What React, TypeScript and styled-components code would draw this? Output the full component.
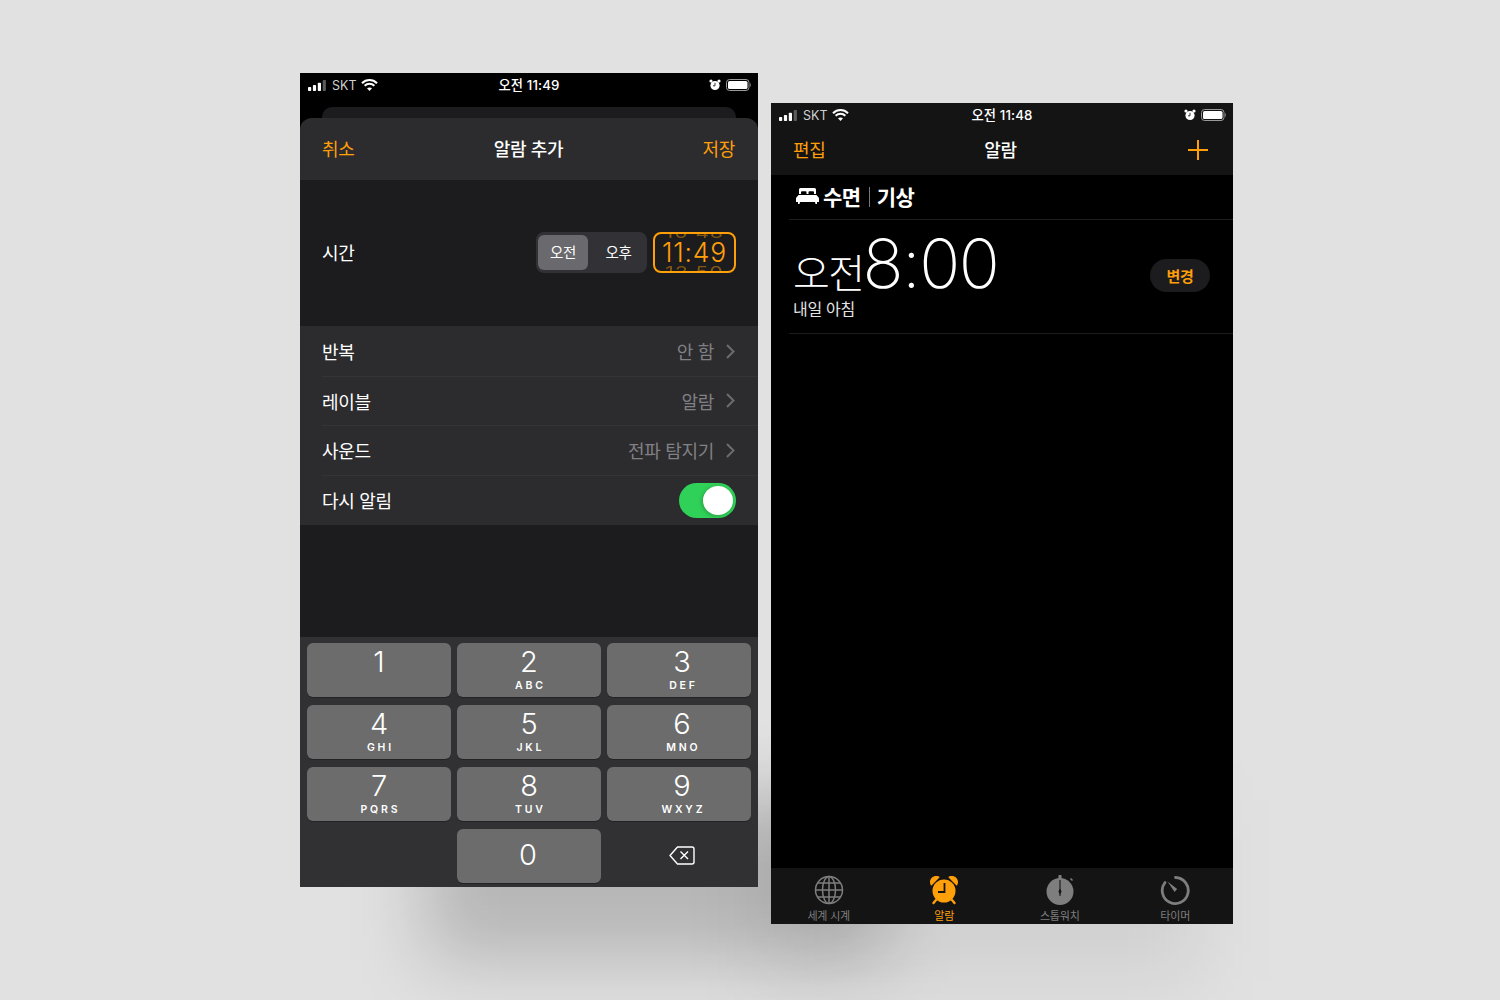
import React from "react";
import styled, { createGlobalStyle } from "styled-components";

const ORANGE = "#ff9f0a";
const FONT = `Inter, "Noto Sans CJK KR", sans-serif`;

const GlobalStyle = createGlobalStyle`
    html, body {
        margin: 0;
        padding: 0;
        background: #e1e1e1;
        font-family: ${FONT};
    }
`;

const Stage = styled.div`
    position: relative;
    width: 1500px;
    height: 1000px;
    overflow: hidden;
    display: flex;
    align-items: flex-start;
    gap: 13px;
    padding-left: 300px;
    box-sizing: border-box;
    background: #e1e1e1;
`;

// soft drop shadows lying under the two phones
const ShadowNear = styled.div`
    position: absolute;
    left: 425px;
    top: 800px;
    width: 460px;
    height: 160px;
    background: rgba(0, 0, 0, 0.19);
    filter: blur(36px);
`;

const ShadowFar = styled.div`
    position: absolute;
    left: 760px;
    top: 800px;
    width: 440px;
    height: 180px;
    background: rgba(0, 0, 0, 0.07);
    filter: blur(40px);
`;

const AddPhone = styled.div`
    position: relative;
    width: 458px;
    height: 814px;
    margin-top: 73px;
    background: #000;
    display: flex;
    flex-direction: column;
`;

const ListPhone = styled.div`
    position: relative;
    width: 462px;
    height: 821px;
    margin-top: 103px;
    background: #000;
    display: flex;
    flex-direction: column;
`;

const StatusBar = styled.div<{ $bg: string }>`
    height: 24px;
    flex: none;
    padding: 0 6px 0 8px;
    display: grid;
    grid-template-columns: 1fr auto 1fr;
    align-items: center;
    background: ${(p) => p.$bg};
    color: #fff;
`;

const StatusLeft = styled.div`
    display: flex;
    align-items: center;
    gap: 4px;
    font-size: 12.5px;
    color: #d0d0d0;
`;

const StatusTime = styled.div`
    font-size: 13.3px;
    font-weight: 500;
    letter-spacing: 0.1px;
    margin-top: -2px;
    margin-right: 2px;
`;

const StatusRight = styled.div`
    display: flex;
    justify-content: flex-end;
    align-items: center;
    gap: 5px;
`;

const BackCard = styled.div`
    height: 11px;
    flex: none;
    margin: 10px 22px 0;
    background: #1c1c1e;
    border-radius: 10px 10px 0 0;
`;

const Sheet = styled.div`
    flex: 1;
    display: flex;
    flex-direction: column;
    background: #1c1c1e;
    border-radius: 12px 12px 0 0;
    overflow: hidden;
`;

const SheetHeader = styled.div`
    height: 62px;
    flex: none;
    padding: 0 23px 3px 22px;
    box-sizing: border-box;
    display: grid;
    grid-template-columns: 1fr auto 1fr;
    align-items: center;
    background: #2c2c2e;
    font-size: 18px;
    letter-spacing: -0.3px;
    color: #fff;
`;

const HeaderAction = styled.div<{ $end?: boolean }>`
    color: ${ORANGE};
    text-align: ${(p) => (p.$end ? "right" : "left")};
`;

const HeaderTitle = styled.div`
    font-weight: 500;
`;

const TimeRow = styled.div`
    height: 146px;
    flex: none;
    padding: 0 22px 2px;
    box-sizing: border-box;
    display: flex;
    align-items: center;
    color: #fff;
    font-size: 18px;
    letter-spacing: -0.3px;
`;

const TimeLabel = styled.div`
    flex: 1;
`;

const Segment = styled.div`
    width: 111px;
    height: 41px;
    box-sizing: border-box;
    padding: 3px 2px;
    margin-right: 6px;
    display: grid;
    grid-template-columns: 50px 1fr;
    background: #323236;
    border-radius: 8px;
`;

const SegmentItem = styled.div<{ $active?: boolean }>`
    display: flex;
    align-items: center;
    justify-content: center;
    font-size: 14.5px;
    padding-left: ${(p) => (p.$active ? "0" : "4px")};
    padding-bottom: 1px;
    border-radius: 6px;
    background: ${(p) => (p.$active ? "#69696e" : "transparent")};
`;

const TimeWheel = styled.div`
    width: 83px;
    height: 41px;
    box-sizing: border-box;
    border: 2px solid ${ORANGE};
    border-radius: 8px;
    overflow: hidden;
    display: flex;
    flex-direction: column;
    align-items: center;
    justify-content: center;
    color: ${ORANGE};
`;

const WheelPeek = styled.div`
    flex: none;
    height: 11px;
    font-size: 21px;
    line-height: 11px;
    letter-spacing: 1px;
    opacity: 0.45;
    transform: scaleY(0.7);
`;

const WheelValue = styled.div`
    flex: none;
    font-size: 26.5px;
    font-weight: 300;
    line-height: 28px;
    letter-spacing: 0.8px;
`;

const OptionList = styled.div`
    flex: none;
    padding-top: 1px;
    background: #2c2c2e;
`;

const OptionRow = styled.div`
    height: 49.5px;
    margin-left: 22px;
    padding-right: 23px;
    box-sizing: border-box;
    display: flex;
    align-items: center;
    color: #fff;
    font-size: 18px;
    letter-spacing: -0.3px;
    border-bottom: 1px solid #343436;
    &:last-child {
        border-bottom: none;
        padding-right: 22px;
    }
`;

const OptionLabel = styled.div`
    flex: 1;
`;

const OptionValue = styled.div`
    color: #808085;
    margin-right: 12px;
`;

const Toggle = styled.div`
    width: 57px;
    height: 35px;
    box-sizing: border-box;
    padding: 3px;
    display: flex;
    justify-content: flex-end;
    background: #30d158;
    border-radius: 18px;
`;

const ToggleKnob = styled.div`
    width: 30px;
    height: 29px;
    border-radius: 50%;
    background: #fff;
    box-shadow: -1px 1px 4px rgba(0, 0, 0, 0.25);
`;

const Keypad = styled.div`
    margin-top: auto;
    height: 250px;
    flex: none;
    box-sizing: border-box;
    padding: 6px 7px 0;
    display: grid;
    grid-template-columns: repeat(3, 144px);
    grid-auto-rows: 54px;
    column-gap: 6px;
    row-gap: 8px;
    background: #313133;
`;

const Key = styled.div`
    display: flex;
    flex-direction: column;
    align-items: center;
    background: #6c6c6c;
    border-radius: 6px;
    box-shadow: 0 1px 0 #232325;
    color: #fff;
    &:nth-child(3n) {
        padding-left: 6px;
    }
`;

const KeyDigit = styled.div<{ $solo?: boolean }>`
    font-size: 29px;
    font-weight: 300;
    line-height: 30px;
    margin-top: ${(p) => (p.$solo ? "11px" : "4px")};
    margin-right: ${(p) => (p.$solo ? "2px" : "0")};
`;

const KeyLetters = styled.div`
    font-size: 10.5px;
    font-weight: 600;
    line-height: 12px;
    letter-spacing: 2.8px;
    margin-right: -2.8px;
    margin-top: 3px;
`;

const KeySlot = styled.div`
    display: flex;
    align-items: center;
    justify-content: center;
    &:last-child {
        padding-left: 6px;
        padding-bottom: 2px;
    }
`;

const NavBar = styled.div`
    height: 48px;
    flex: none;
    box-sizing: border-box;
    padding: 0 25px 5px 22px;
    display: grid;
    grid-template-columns: 1fr auto 1fr;
    align-items: center;
    background: #141414;
    color: #fff;
    font-size: 18px;
    letter-spacing: -0.3px;
`;

const NavTitle = styled.div`
    font-weight: 500;
`;

const NavEnd = styled.div`
    display: flex;
    justify-content: flex-end;
    padding-top: 2px;
`;

const SleepRow = styled.div`
    height: 45px;
    flex: none;
    margin-left: 18px;
    padding: 0 0 3px 7px;
    box-sizing: border-box;
    display: flex;
    align-items: center;
    border-bottom: 1px solid #1c1c1e;
    color: #fff;
    font-size: 21px;
    font-weight: 700;
    letter-spacing: -0.5px;
`;

const SleepWord = styled.span`
    margin-left: 4px;
`;

const SleepDivider = styled.span`
    width: 1px;
    height: 20px;
    margin: 3px 7px 0 8px;
    background: #77777c;
`;

const AlarmRow = styled.div`
    height: 114px;
    flex: none;
    margin-left: 18px;
    padding: 0 23px 6px 4px;
    box-sizing: border-box;
    display: flex;
    align-items: center;
    border-bottom: 1px solid #1c1c1e;
    color: #fff;
`;

const AlarmInfo = styled.div`
    flex: 1;
`;

const AlarmTime = styled.div`
    display: flex;
    align-items: baseline;
    height: 70px;
    line-height: 70px;
`;

const AlarmPeriod = styled.span`
    font-size: 40px;
    font-weight: 300;
    letter-spacing: -1.5px;
    margin-right: -1px;
`;

const AlarmClock = styled.span`
    font-size: 68px;
    font-weight: 200;
    letter-spacing: -1.6px;
`;

const AlarmNote = styled.div`
    font-size: 16px;
    line-height: 22px;
    letter-spacing: -0.3px;
    color: #e4e4e4;
`;

const ChangeButton = styled.div`
    width: 60px;
    height: 33px;
    margin-top: 4px;
    display: flex;
    align-items: center;
    justify-content: center;
    border-radius: 17px;
    background: #1c1c1e;
    color: ${ORANGE};
    font-size: 15px;
    font-weight: 700;
    letter-spacing: -0.4px;
`;

const TabBar = styled.div`
    margin-top: auto;
    height: 56px;
    flex: none;
    display: grid;
    grid-template-columns: repeat(4, 1fr);
    background: #141414;
`;

const Tab = styled.div<{ $active?: boolean }>`
    display: flex;
    flex-direction: column;
    align-items: center;
    padding-top: 7px;
    box-sizing: border-box;
    color: ${(p) => (p.$active ? ORANGE : "#7e7e7e")};
    font-size: 11px;
    letter-spacing: -0.2px;
    line-height: 14px;
    svg {
        display: block;
        margin-bottom: 4px;
    }
`;

const SignalIcon = () => (
    <svg width="20" height="11" viewBox="0 0 20 11">
        <rect x="0" y="7" width="3.2" height="4" rx="0.8" fill="#fff" />
        <rect x="4.9" y="5" width="3.2" height="6" rx="0.8" fill="#fff" />
        <rect x="9.8" y="2.8" width="3.2" height="8.2" rx="0.8" fill="#fff" />
        <rect x="14.7" y="0" width="3.2" height="11" rx="0.8" fill="#5a5a5a" />
    </svg>
);

const WifiIcon = () => (
    <svg width="17" height="12" viewBox="0 0 17 12" fill="none" stroke="#fff" strokeWidth="2">
        <path d="M1 4.2 C5.2 0 11.8 0 16 4.2" />
        <path d="M3.6 6.8 C6.4 4.2 10.6 4.2 13.4 6.8" />
        <path d="M8.5 12 L6 9.3 C7.4 8.1 9.6 8.1 11 9.3 Z" fill="#fff" stroke="none" />
    </svg>
);

const StatusAlarmIcon = () => (
    <svg width="12" height="12" viewBox="0 0 12 12">
        <circle cx="6" cy="6.5" r="4.6" fill="#fff" />
        <circle cx="2" cy="2" r="1.6" fill="#fff" />
        <circle cx="10" cy="2" r="1.6" fill="#fff" />
        <path d="M6 3.8 V6.8 H4" stroke="#333" strokeWidth="1" fill="none" />
    </svg>
);

const BatteryIcon = () => (
    <svg width="26" height="12" viewBox="0 0 26 12">
        <rect x="0.5" y="0.5" width="22.5" height="11" rx="3" fill="none" stroke="#9a9a9a" />
        <rect x="2" y="2" width="19.5" height="8" rx="1.6" fill="#fff" />
        <path d="M24.3 4 C25.3 4.4 25.3 7.6 24.3 8 Z" fill="#9a9a9a" />
    </svg>
);

const ChevronIcon = () => (
    <svg width="9" height="15" viewBox="0 0 9 15" fill="none" stroke="#6b6b70" strokeWidth="2">
        <path d="M1 1 L7.5 7.5 L1 14" />
    </svg>
);

const BackspaceIcon = () => (
    <svg width="26" height="19" viewBox="0 0 26 19" fill="none" stroke="#fff" strokeWidth="1.4">
        <path d="M8.5 1 H23 a2 2 0 0 1 2 2 V16 a2 2 0 0 1 -2 2 H8.5 L1 9.5 Z" strokeLinejoin="round" />
        <path d="M11.5 5.5 L19 13 M19 5.5 L11.5 13" />
    </svg>
);

const PlusIcon = () => (
    <svg width="20" height="20" viewBox="0 0 20 20" stroke={ORANGE} strokeWidth="2">
        <path d="M0 10 H20 M10 0 V20" />
    </svg>
);

const BedIcon = () => (
    <svg width="23" height="16" viewBox="0 0 23 16" fill="#fff">
        <path d="M3 1.5 a1.5 1.5 0 0 1 1.5 -1.5 H18.5 a1.5 1.5 0 0 1 1.5 1.5 V6 H18 V4.2 a1 1 0 0 0 -1 -1 H13.5 a1 1 0 0 0 -1 1 V6 H10.5 V4.2 a1 1 0 0 0 -1 -1 H6 a1 1 0 0 0 -1 1 V6 H3 Z" />
        <path d="M2.5 7 H20.5 L23 10 V14 H21 V16 H19.5 L19 14 H4 L3.5 16 H2 V14 H0 V10 Z" />
    </svg>
);

const GlobeIcon = () => (
    <svg width="30" height="30" viewBox="0 0 30 30" fill="none" stroke="#7e7e7e" strokeWidth="1.5">
        <circle cx="15" cy="15" r="13.5" />
        <ellipse cx="15" cy="15" rx="6.5" ry="13.5" />
        <path d="M15 1.5 V28.5 M1.5 15 H28.5 M3.5 8 H26.5 M3.5 22 H26.5" />
    </svg>
);

const AlarmTabIcon = () => (
    <svg width="30" height="30" viewBox="0 0 30 30">
        <circle cx="15" cy="16" r="11.5" fill={ORANGE} />
        <path d="M1.8 10.2 C-1 5 3.8 -0.6 10 1.6 C10.6 1.8 10.6 2.4 10.2 2.7 L2.8 10.2 C2.5 10.6 2 10.6 1.8 10.2 Z" fill={ORANGE} />
        <path d="M28.2 10.2 C31 5 26.2 -0.6 20 1.6 C19.4 1.8 19.4 2.4 19.8 2.7 L27.2 10.2 C27.5 10.6 28 10.6 28.2 10.2 Z" fill={ORANGE} />
        <path d="M7 25 L4.5 28 M23 25 L25.5 28" stroke={ORANGE} strokeWidth="2.4" strokeLinecap="round" />
        <path d="M15.5 8 V17 H9" stroke="#141414" strokeWidth="1.8" fill="none" />
    </svg>
);

const StopwatchIcon = () => (
    <svg width="30" height="30" viewBox="0 0 30 30">
        <circle cx="15" cy="16.5" r="13.5" fill="#7e7e7e" />
        <rect x="13.4" y="0" width="3.2" height="3.5" rx="1" fill="#7e7e7e" />
        <path d="M25.5 3.5 L27.5 5.5" stroke="#7e7e7e" strokeWidth="1.6" />
        <path d="M15 5 V21" stroke="#141414" strokeWidth="1.1" />
        <path d="M15 13.5 L16.6 16.5 L15 19.5 L13.4 16.5 Z" fill="#141414" />
    </svg>
);

const TimerIcon = () => (
    <svg width="30" height="30" viewBox="0 0 30 30" fill="none" stroke="#7e7e7e" strokeWidth="2.8">
        <path d="M15.5 2.5 A13 13 0 1 1 5 7.5" strokeLinecap="round" />
        <path d="M7.5 6.5 L17.2 14 L14.6 17 Z" fill="#7e7e7e" stroke="none" />
    </svg>
);

const keys = [
    ["1", ""], ["2", "ABC"], ["3", "DEF"],
    ["4", "GHI"], ["5", "JKL"], ["6", "MNO"],
    ["7", "PQRS"], ["8", "TUV"], ["9", "WXYZ"],
];

const options = [
    ["반복", "안 함"],
    ["레이블", "알람"],
    ["사운드", "전파 탐지기"],
];

const App: React.FC = () => {
    return (
        <Stage>
            <GlobalStyle />
            <ShadowNear />
            <ShadowFar />
            <AddPhone>
                <StatusBar $bg="#000">
                    <StatusLeft>
                        <SignalIcon />
                        <span>SKT</span>
                        <WifiIcon />
                    </StatusLeft>
                    <StatusTime>오전 11:49</StatusTime>
                    <StatusRight>
                        <StatusAlarmIcon />
                        <BatteryIcon />
                    </StatusRight>
                </StatusBar>
                <BackCard />
                <Sheet>
                    <SheetHeader>
                        <HeaderAction>취소</HeaderAction>
                        <HeaderTitle>알람 추가</HeaderTitle>
                        <HeaderAction $end>저장</HeaderAction>
                    </SheetHeader>
                    <TimeRow>
                        <TimeLabel>시간</TimeLabel>
                        <Segment>
                            <SegmentItem $active>오전</SegmentItem>
                            <SegmentItem>오후</SegmentItem>
                        </Segment>
                        <TimeWheel>
                            <WheelPeek>10 48</WheelPeek>
                            <WheelValue>11:49</WheelValue>
                            <WheelPeek>12 50</WheelPeek>
                        </TimeWheel>
                    </TimeRow>
                    <OptionList>
                        {options.map(([label, value]) => (
                            <OptionRow key={label}>
                                <OptionLabel>{label}</OptionLabel>
                                <OptionValue>{value}</OptionValue>
                                <ChevronIcon />
                            </OptionRow>
                        ))}
                        <OptionRow>
                            <OptionLabel>다시 알림</OptionLabel>
                            <Toggle>
                                <ToggleKnob />
                            </Toggle>
                        </OptionRow>
                    </OptionList>
                    <Keypad>
                        {keys.map(([digit, letters]) => (
                            <Key key={digit}>
                                <KeyDigit>{digit}</KeyDigit>
                                {letters && <KeyLetters>{letters}</KeyLetters>}
                            </Key>
                        ))}
                        <KeySlot />
                        <Key>
                            <KeyDigit $solo>0</KeyDigit>
                        </Key>
                        <KeySlot>
                            <BackspaceIcon />
                        </KeySlot>
                    </Keypad>
                </Sheet>
            </AddPhone>
            <ListPhone>
                <StatusBar $bg="#141414">
                    <StatusLeft>
                        <SignalIcon />
                        <span>SKT</span>
                        <WifiIcon />
                    </StatusLeft>
                    <StatusTime>오전 11:48</StatusTime>
                    <StatusRight>
                        <StatusAlarmIcon />
                        <BatteryIcon />
                    </StatusRight>
                </StatusBar>
                <NavBar>
                    <HeaderAction>편집</HeaderAction>
                    <NavTitle>알람</NavTitle>
                    <NavEnd>
                        <PlusIcon />
                    </NavEnd>
                </NavBar>
                <SleepRow>
                    <BedIcon />
                    <SleepWord>수면</SleepWord>
                    <SleepDivider />
                    <span>기상</span>
                </SleepRow>
                <AlarmRow>
                    <AlarmInfo>
                        <AlarmTime>
                            <AlarmPeriod>오전</AlarmPeriod>
                            <AlarmClock>8:00</AlarmClock>
                        </AlarmTime>
                        <AlarmNote>내일 아침</AlarmNote>
                    </AlarmInfo>
                    <ChangeButton>변경</ChangeButton>
                </AlarmRow>
                <TabBar>
                    <Tab>
                        <GlobeIcon />
                        세계 시계
                    </Tab>
                    <Tab $active>
                        <AlarmTabIcon />
                        알람
                    </Tab>
                    <Tab>
                        <StopwatchIcon />
                        스톱워치
                    </Tab>
                    <Tab>
                        <TimerIcon />
                        타이머
                    </Tab>
                </TabBar>
            </ListPhone>
        </Stage>
    );
};

export default App;
